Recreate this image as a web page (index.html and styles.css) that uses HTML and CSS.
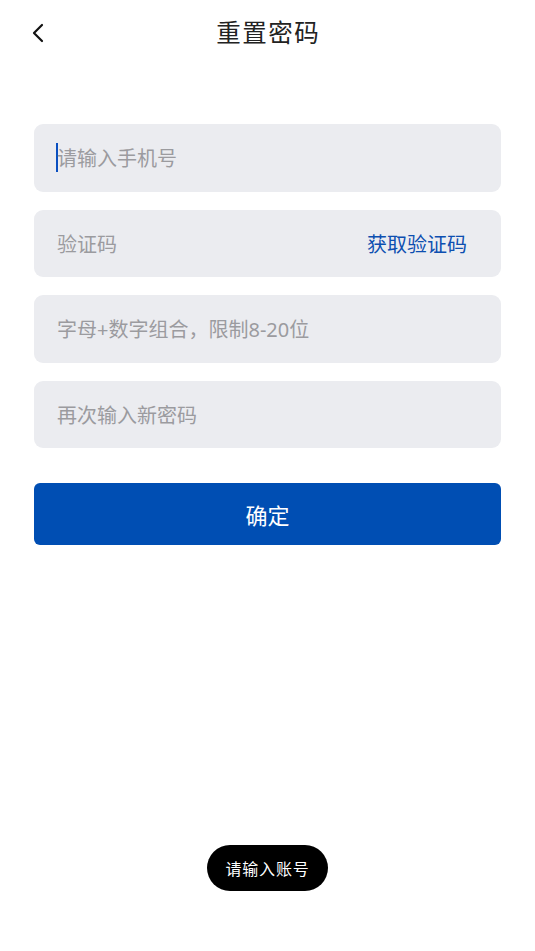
FILE: index.html
```html
<!DOCTYPE html>
<html lang="zh-CN">
<head>
<meta charset="utf-8">
<title>重置密码</title>
<link rel="stylesheet" href="styles.css">
</head>
<body>
<div class="page">
  <header class="nav">
    <button class="back" aria-label="返回">
      <svg width="14" height="20" viewBox="0 0 14 20"><path d="M11 2 L3 10 L11 18" fill="none" stroke="#111" stroke-width="2.2" stroke-linecap="round" stroke-linejoin="round"/></svg>
    </button>
    <h1 class="title">重置密码</h1>
  </header>
  <form class="form">
    <div class="field"><span class="caret"></span><span class="ph">请输入手机号</span></div>
    <div class="field"><span class="ph">验证码</span><span class="code">获取验证码</span></div>
    <div class="field"><span class="ph">字母+数字组合，限制8-20位</span></div>
    <div class="field"><span class="ph">再次输入新密码</span></div>
    <div class="submit">确定</div>
  </form>
  <div class="toast">请输入账号</div>
</div>
</body>
</html>
```
FILE: styles.css
```css
html, body {
  margin: 0;
  padding: 0;
  background: #fff;
}
body {
  font-family: "Noto Sans", "Noto Sans CJK SC", sans-serif;
  width: 535px;
  height: 951px;
  overflow: hidden;
}
.page {
  position: relative;
  height: 951px;
}
.nav {
  position: relative;
  height: 66px;
  display: flex;
  align-items: center;
  justify-content: center;
}
.back {
  position: absolute;
  left: 31px;
  top: 23px;
  border: 0;
  background: none;
  padding: 0;
  width: 14px;
  height: 20px;
  display: flex;
}
.title {
  margin: 0;
  font-size: 24.5px;
  font-weight: 400;
  color: #222;
  letter-spacing: 1.5px;
  text-indent: 1.5px;
  line-height: 66px;
}
.form {
  padding: 58px 34px 0 34px;
  display: flex;
  flex-direction: column;
  gap: 18px;
}
.field {
  height: 67.5px;
  background: #ebecf0;
  border-radius: 9px;
  display: flex;
  align-items: center;
  padding: 0 34px 0 23px;
  position: relative;
}
.ph {
  font-size: 20px;
  color: #9b9b9f;
  flex: 1;
}
.caret {
  width: 2px;
  height: 29px;
  background: #0a4fc0;
  margin-right: -1px;
  margin-left: -1px;
}
.code {
  font-size: 20px;
  color: #0d4fb0;
}
.submit {
  margin-top: 17px;
  height: 62px;
  background: #004eb3;
  border-radius: 6px;
  color: #fff;
  font-size: 22px;
  display: flex;
  align-items: center;
  justify-content: center;
}
.toast {
  position: absolute;
  left: 207px;
  top: 845px;
  width: 121px;
  height: 46px;
  border-radius: 23px;
  background: #000;
  color: #fff;
  font-size: 16px;
  letter-spacing: 0.8px;
  display: flex;
  align-items: center;
  justify-content: center;
}
```
